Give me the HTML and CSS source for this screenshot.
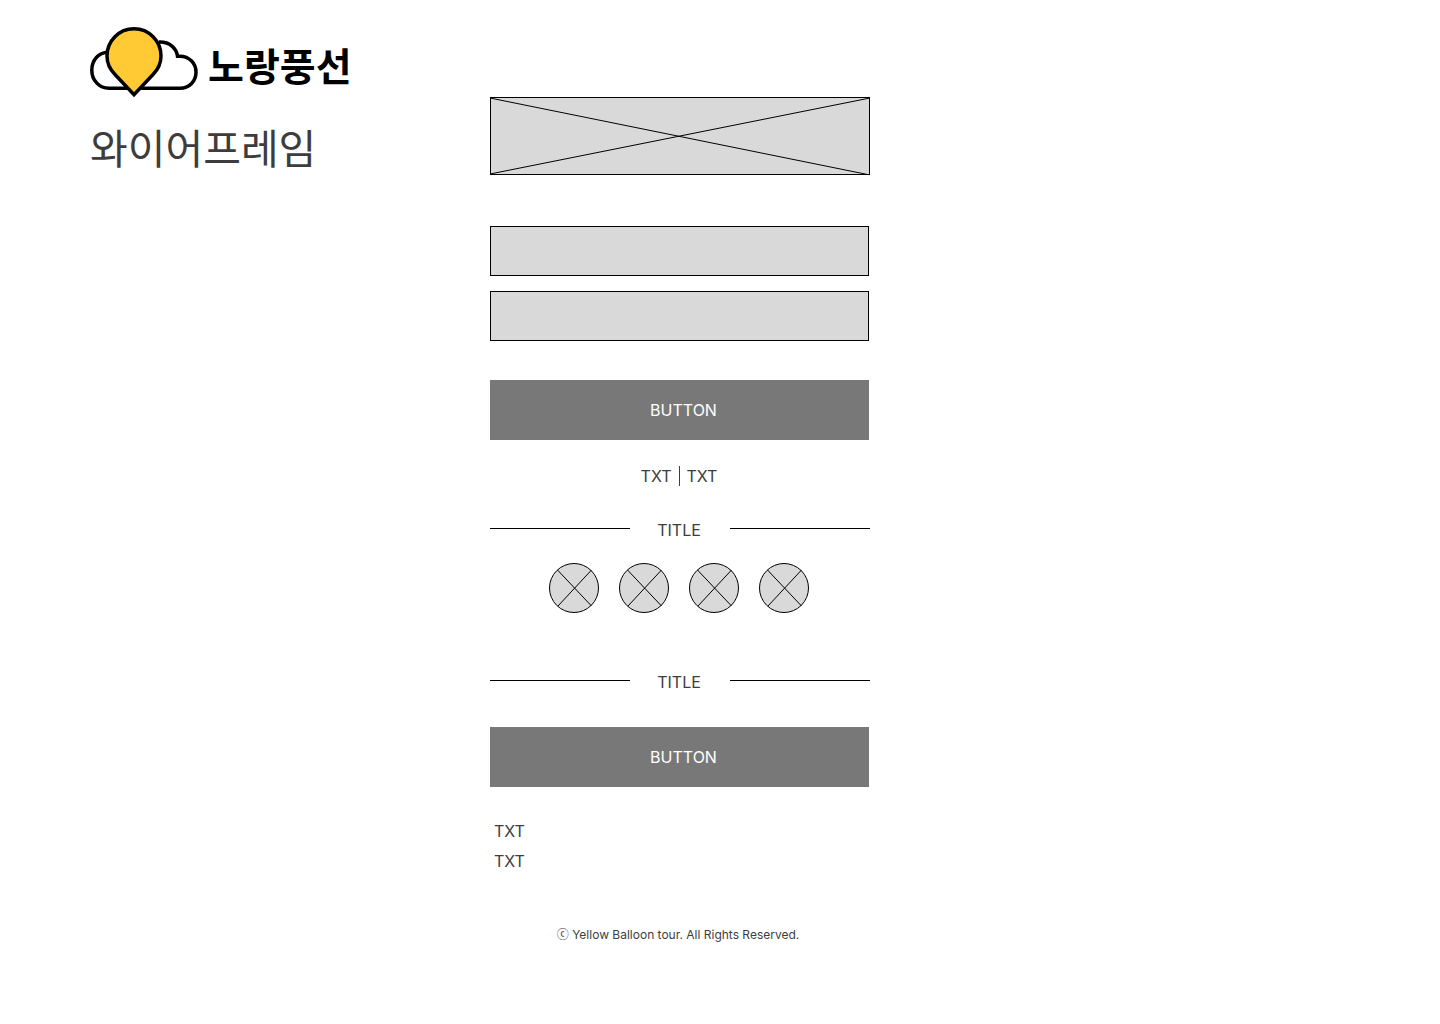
FILE: index.html
```html
<!DOCTYPE html>
<html lang="ko">
<head>
<meta charset="utf-8">
<meta name="viewport" content="width=device-width, initial-scale=1">
<title>노랑풍선 와이어프레임</title>
<link rel="stylesheet" href="styles.css">
</head>
<body>
<div class="page">
  <header class="intro">
    <div class="brand">
      <svg class="brand-mark" viewBox="0 0 108 70" aria-hidden="true">
        <path class="cloud" d="M17 25.2C8 26 1.8 33.5 1.8 43.2C1.8 53.5 9.5 61.3 19 61.3H90C99 61.3 106 54.3 106 45.2C106 36.2 99 29.2 90 29.2H87.5C86.5 21.5 80 14.6 69 15"/>
        <path class="balloon" d="M17 29A27 27.2 0 0 1 71 29C71 36.5 68 42.5 63 47.5L44 67.8L25 47.5C20 42.5 17 36.5 17 29Z"/>
      </svg>
      <span class="brand-name">노랑풍선</span>
    </div>
    <h1 class="heading">와이어프레임</h1>
  </header>

  <main class="wireframe">
    <svg class="banner" viewBox="0 0 380 78" preserveAspectRatio="none" role="img" aria-label="Image placeholder">
      <rect x="0.5" y="0.5" width="379" height="77"/>
      <path d="M0 1L380 78M0 77L380 1"/>
    </svg>

    <form class="form">
      <input class="field" type="text" aria-label="ID">
      <input class="field" type="password" aria-label="Password">
      <button class="button" type="button">BUTTON</button>
    </form>

    <nav class="links">
      <a href="#">TXT</a><span class="bar"></span><a href="#">TXT</a>
    </nav>

    <h2 class="title"><span class="title-text">TITLE</span></h2>

    <div class="socials">
      <button class="social" type="button" aria-label="Option 1"><svg viewBox="0 0 50 50"><circle cx="25" cy="25" r="24.5"/><path d="M8.5 7L42.5 43M42.5 7L9 43"/></svg></button>
      <button class="social" type="button" aria-label="Option 2"><svg viewBox="0 0 50 50"><circle cx="25" cy="25" r="24.5"/><path d="M8.5 7L42.5 43M42.5 7L9 43"/></svg></button>
      <button class="social" type="button" aria-label="Option 3"><svg viewBox="0 0 50 50"><circle cx="25" cy="25" r="24.5"/><path d="M8.5 7L42.5 43M42.5 7L9 43"/></svg></button>
      <button class="social" type="button" aria-label="Option 4"><svg viewBox="0 0 50 50"><circle cx="25" cy="25" r="24.5"/><path d="M8.5 7L42.5 43M42.5 7L9 43"/></svg></button>
    </div>

    <h2 class="title"><span class="title-text">TITLE</span></h2>
    <button class="button" type="button">BUTTON</button>

    <div class="notes">
      <p>TXT</p>
      <p>TXT</p>
    </div>

    <footer class="footer">ⓒ Yellow Balloon tour. All Rights Reserved.</footer>
  </main>
</div>
</body>
</html>
```
FILE: styles.css
```css
* {
  box-sizing: border-box;
}

body {
  margin: 0;
  background: #fff;
  color: #3d3d3d;
  font: 16px/20px Inter, "Noto Sans CJK KR", sans-serif;
}

h1,
h2,
p {
  margin: 0;
  font-weight: 400;
}

.page {
  display: grid;
  grid-template-columns: 400px minmax(0, 380px);
  padding: 0 90px 80px;
}

.intro {
  padding-top: 27px;
}

.brand {
  display: flex;
  align-items: center;
  gap: 10px;
  height: 70px;
}

.brand-mark {
  width: 108px;
  height: 70px;
  overflow: visible;
}

.cloud,
.balloon {
  fill: #fff;
  stroke: #000;
  stroke-width: 3.5;
}

.balloon {
  fill: #ffca34;
}

.brand-name {
  padding-top: 4px;
  color: #000;
  font: 700 39px/60px "Noto Sans CJK KR", sans-serif;
}

.heading {
  margin-top: 19px;
  font: 400 41px/60px "Noto Sans CJK KR", sans-serif;
}

.wireframe {
  display: flex;
  flex-direction: column;
  padding-top: 97px;
}

.banner {
  width: 100%;
  height: 78px;
}

.banner,
.social svg {
  display: block;
  fill: #d9d9d9;
  stroke: #000;
  stroke-width: 1;
}

.form {
  display: flex;
  flex-direction: column;
  margin-top: 51px;
}

.field {
  height: 50px;
  margin: 0 1px 15px 0;
  padding: 0 16px;
  border: 1px solid #000;
  border-radius: 0;
  background: #d9d9d9;
  font: inherit;
}

.button {
  height: 60px;
  margin-right: 1px;
  padding: 0 0 0 8px;
  border: 0;
  background: #787878;
  color: #fff;
  font: inherit;
}

.form .button {
  margin-top: 24px;
}

.links {
  display: flex;
  justify-content: center;
  gap: 7px;
  margin-top: 26px;
  padding-right: 2px;
}

.links a {
  color: inherit;
  text-decoration: none;
}

.bar {
  width: 1px;
  background: #3d3d3d;
}

.title {
  display: grid;
  grid-template-columns: 1fr 100px 1fr;
  margin-top: 34px;
  font-size: 16px;
  line-height: 20px;
  text-align: center;
}

.title-text {
  padding-right: 2px;
}

.title::before,
.title::after {
  content: "";
  height: 1px;
  margin-top: 8px;
  background: #000;
}

.socials {
  display: flex;
  justify-content: center;
  gap: 20px;
  margin: 23px 0 25px;
  padding-right: 2px;
}

.social {
  width: 50px;
  height: 50px;
  padding: 0;
  border: 0;
  background: none;
}

.title + .button {
  margin-top: 35px;
}

.notes {
  display: grid;
  gap: 10px;
  margin-top: 34px;
  padding-left: 4px;
}

.footer {
  margin-top: 54px;
  padding-right: 4px;
  font-size: 12px;
  text-align: center;
}
```
